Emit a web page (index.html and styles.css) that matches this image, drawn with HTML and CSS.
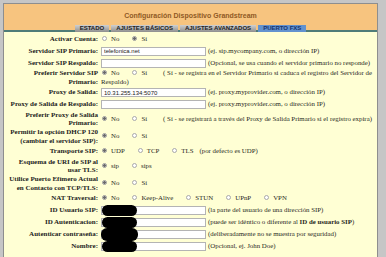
FILE: index.html
```html
<!DOCTYPE html>
<html lang="es">
<head>
<meta charset="utf-8">
<title>Configuración Dispositivo Grandstream</title>
<link rel="stylesheet" href="styles.css">
</head>
<body>
<div class="frame">
  <div class="page">
    <div class="header">
      <div class="title">Configuración Dispositivo Grandstream</div>
      <div class="tabs">
        <span class="tab">ESTADO</span>
        <span class="tab">AJUSTES BÁSICOS</span>
        <span class="tab">AJUSTES AVANZADOS</span>
        <span class="tab active">PUERTO FXS</span>
      </div>
    </div>
    <div class="form">
      <div class="label">Activar Cuenta:</div>
      <div class="value"><span class="opt"><span class="radio"></span>No</span><span class="opt"><span class="radio on"></span>Sí</span></div>

      <div class="label">Servidor SIP Primario:</div>
      <div class="value"><span class="field"><input class="text" value="telefonica.net"></span><span class="hint">(ej. sip.mycompany.com, o dirección IP)</span></div>

      <div class="label">Servidor SIP Respaldo:</div>
      <div class="value"><span class="field"><input class="text" value=""></span><span class="hint">(Opcional, se usa cuando el servidor primario no responde)</span></div>

      <div class="label">Preferir Servidor SIP Primario:</div>
      <div class="value"><span class="opt"><span class="radio on"></span>No</span><span class="opt"><span class="radio"></span>Sí</span><span class="note">( Sí - se registra en el Servidor Primario si caduca el registro del Servidor de</span><br><span>Respaldo)</span></div>

      <div class="label">Proxy de Salida:</div>
      <div class="value"><span class="field"><input class="text" value="10.31.255.134:5070"></span><span class="hint">(ej. proxy.myprovider.com, o dirección IP)</span></div>

      <div class="label">Proxy de Salida de Respaldo:</div>
      <div class="value"><span class="field"><input class="text" value=""></span><span class="hint">(ej. proxy.myprovider.com, o dirección IP)</span></div>

      <div class="label">Preferir Proxy de Salida Primario:</div>
      <div class="value"><span class="opt"><span class="radio on"></span>No</span><span class="opt"><span class="radio"></span>Sí</span><span class="note">( Sí - se registrará a través del Proxy de Salida Primario si el registro expira)</span></div>

      <div class="label">Permitir la opción DHCP 120 (cambiar el servidor SIP):</div>
      <div class="value"><span class="opt"><span class="radio on"></span>No</span><span class="opt"><span class="radio"></span>Sí</span></div>

      <div class="label">Transporte SIP:</div>
      <div class="value"><span class="opt"><span class="radio on"></span>UDP</span><span class="opt"><span class="radio"></span>TCP</span><span class="opt short"><span class="radio"></span>TLS</span>(por defecto es UDP)</div>

      <div class="label">Esquema de URI de SIP al usar TLS:</div>
      <div class="value"><span class="opt"><span class="radio on"></span>sip</span><span class="opt"><span class="radio"></span>sips</span></div>

      <div class="label">Utilice Puerto Efímero Actual en Contacto con TCP/TLS:</div>
      <div class="value"><span class="opt"><span class="radio on"></span>No</span><span class="opt"><span class="radio"></span>Sí</span></div>

      <div class="label">NAT Traversal:</div>
      <div class="value"><span class="opt"><span class="radio on"></span>No</span><span class="opt"><span class="radio"></span>Keep-Alive</span><span class="opt"><span class="radio"></span>STUN</span><span class="opt"><span class="radio"></span>UPnP</span><span class="opt"><span class="radio"></span>VPN</span></div>

      <div class="label">ID Usuario SIP:</div>
      <div class="value"><span class="field"><input class="text" value=""><span class="redact"></span></span><span class="hint">(la parte del usuario de una dirección SIP)</span></div>

      <div class="label">ID Autenticacion:</div>
      <div class="value"><span class="field"><input class="text" value=""><span class="redact"></span></span><span class="hint">(puede ser idéntico o diferente al <b>ID de usuario SIP</b>)</span></div>

      <div class="label">Autenticar contraseña:</div>
      <div class="value"><span class="field"><input class="text" value=""><span class="redact big"></span></span><span class="hint">(deliberadamente no se muestra por seguridad)</span></div>

      <div class="label">Nombre:</div>
      <div class="value"><span class="field"><input class="text" value=""><span class="redact"></span></span><span class="hint">(Opcional, ej. John Doe)</span></div>
    </div>
  </div>
</div>
</body>
</html>
```

FILE: styles.css
```css
html, body {
  margin: 0;
  padding: 0;
}
body {
  background: #c6c6c6;
  font-family: "Liberation Serif", "Times New Roman", serif;
  color: #1c1c1c;
  width: 386px;
  height: 257px;
  overflow: hidden;
}
.frame {
  padding: 3px 8px 0 3px;
}
.page {
  border: 1px solid #8e8e8e;
  border-bottom: none;
  background: #ffffd4;
  height: 260px;
  overflow: hidden;
}
.header {
  background: #f7c47f;
  height: 28px;
  padding-top: 7px;
  box-sizing: border-box;
  display: flex;
  flex-direction: column;
  align-items: center;
  border-bottom: 2px solid #4f7c78;
}
.title {
  font-family: "Liberation Sans", Arial, sans-serif;
  font-weight: bold;
  font-size: 7px;
  line-height: 9px;
  height: 9px;
  color: #8f5a25;
  margin-bottom: 5px;
}
.tabs {
  display: flex;
  gap: 2px;
  height: 7px;
}
.tab {
  font-family: "Liberation Sans", Arial, sans-serif;
  font-weight: bold;
  font-size: 6px;
  line-height: 7px;
  padding: 0 5px;
  color: #1e1e1e;
  background: linear-gradient(#d0d0d0, #8e8e8e);
}
.tab.active {
  background: #6292cf;
  color: #17336e;
}
.form {
  display: grid;
  grid-template-columns: 95px 1fr;
  grid-auto-rows: minmax(12px, auto);
  line-height: 8.75px;
  padding-top: 1px;
}
.label {
  font-size: 7px;
  font-weight: bold;
  text-align: right;
  padding-right: 1px;
  align-self: center;
}
.value {
  font-size: 6.85px;
  padding-left: 2px;
  align-self: center;
  color: #2a2a1e;
}
.opt {
  margin-right: 12px;
  white-space: nowrap;
}
.opt.short {
  margin-right: 6px;
}
.note {
  margin-left: 4px;
}
.radio {
  display: inline-block;
  box-sizing: border-box;
  width: 5px;
  height: 5px;
  border-radius: 50%;
  border: 1px solid #a9a9a9;
  background: #fff;
  vertical-align: 0;
  margin: 0 4px 0 1px;
}
.radio.on {
  background: radial-gradient(circle, #6a6a6a 0 1.2px, #fff 1.6px);
  border-color: #9a9a9a;
}
.field {
  position: relative;
  display: inline-block;
  vertical-align: middle;
  margin-right: 2px;
}
.text {
  display: block;
  box-sizing: border-box;
  width: 105px;
  height: 9px;
  margin: 0;
  padding: 0 2px;
  border: 1px solid #b4b4b4;
  background: #fff;
  font-family: "Liberation Sans", Arial, sans-serif;
  font-size: 6px;
  color: #222;
}
.hint {
  vertical-align: middle;
}
.redact {
  position: absolute;
  left: 1px;
  top: -1px;
  width: 35px;
  height: 11px;
  border-radius: 6px;
  background: #000;
}
.redact.big {
  left: 0;
  top: -2px;
  width: 37px;
  height: 13px;
}
```
